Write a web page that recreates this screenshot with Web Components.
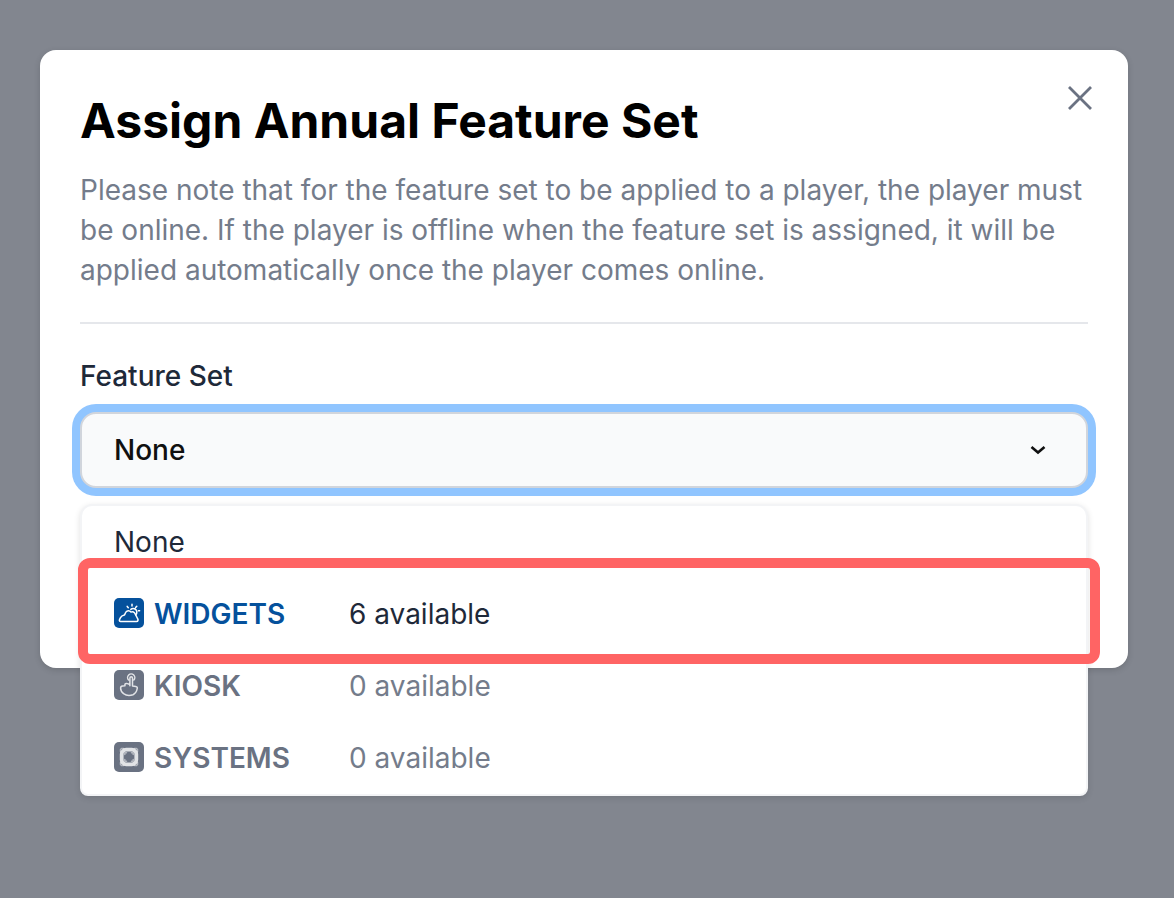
<!DOCTYPE html>
<html lang="en">
<head>
<meta charset="UTF-8">
<title>Assign Annual Feature Set</title>
<style>
    body {
        margin: 0;
        width: 1174px;
        height: 898px;
        overflow: hidden;
        background: #82868f;
        font-family: Inter, "Liberation Sans", sans-serif;
        font-size: 28px;
        line-height: 40px;
        color: #1e2939;
    }
</style>
</head>
<body>
<modal-dialog>
    <span slot="title">Assign Annual Feature Set</span>
    <span slot="description">Please note that for the feature set to be applied to a player, the player must<br>be online. If the player is offline when the feature set is assigned, it will be<br>applied automatically once the player comes online.</span>
    <select-field>
        <span slot="label">Feature Set</span>
        <span slot="value">None</span>
        <feature-option>None</feature-option>
        <feature-option icon="widgets" available="6" highlighted>WIDGETS</feature-option>
        <feature-option icon="kiosk" available="0" disabled>KIOSK</feature-option>
        <feature-option icon="systems" available="0" disabled>SYSTEMS</feature-option>
    </select-field>
</modal-dialog>

<script>
const icons = {
    widgets: `
        <path d="M6.5 23.5h16c1.600 0 2-1.600 1-3l-2.300-4.600c-.8-1.800-2.600-2.600-4.200-1.800-1.400-2-4.400-1.800-5.400.4-.5 1-.6 2-1.300 2.600-1.600.4-3 1-3.800 2.600l-1 2c-.4 1 .1 1.800 1 1.800z"/>
        <path d="M16.8 11.4c2.2-1.8 5.5-.5 6 2.200.2 1.400-.2 2.400-1.200 3.200M13.2 8.400l1.100 1.300M18 6.200v1.900M22.8 8.200l-1.200 1.400M25.600 12.700h-1.200"/>`,
    kiosk: `
        <g stroke-opacity=".8">
            <path d="M14.6 10a3.600 3.600 0 1 1 5.200 0"/>
            <path d="M15.900 15.800V8c0-1.600 2.600-1.600 2.600 0v8l3.300.4c1.300.2 1.700 1.100 1.400 2.300-.5 2.700-1.900 5-4.200 6-3 1.100-6.800.9-9.400-1-1.900-1.500-3-3.600-3-5.700 0-1.300.7-2 1.900-2.100l2.500-.1c-.4-1.600.2-2.300 1.500-2.200 1.600.1 2.500.5 3.400 1.400"/>
        </g>`,
    systems: `
        <rect x="7.700" y="7.700" width="14.600" height="14.600" rx="4.500" stroke-width="3.800" stroke-opacity=".8"/>
        <path stroke-width="1.500" stroke-opacity=".5" d="M6.500 9.500v-2l1-1h2M20.500 6.500h2l1 1v2M6.500 20.500v2l1 1h2M20.500 23.500h2l1-1v-2M10.800 12.500v-1.700h1.700M17.500 10.800h1.700v1.700M10.800 17.500v1.700h1.700M17.500 19.200h1.700v-1.700"/>`
};

class ModalDialog extends HTMLElement {
    constructor() {
        super();
        this.attachShadow({ mode: 'open' });
        this.shadowRoot.innerHTML = `
            <style>
                :host {
                    display: block;
                    box-sizing: border-box;
                    width: 1088px;
                    height: 618px;
                    margin: 50px 0 0 40px;
                    padding: 40px;
                    border-radius: 16px;
                    background: #fff;
                    box-shadow: 0 2px 6px rgba(0, 0, 0, .15);
                }
                header {
                    display: flex;
                    justify-content: space-between;
                    height: 80px;
                }
                h2 {
                    margin: 0;
                    padding-top: 7px;
                    font-size: 48px;
                    line-height: 48px;
                    font-weight: 700;
                    font-optical-sizing: none;
                    color: #000;
                    white-space: nowrap;
                }
                button {
                    width: 32px;
                    height: 32px;
                    margin: -8px -8px 0 0;
                    padding: 0;
                    border: 0;
                    background: none;
                    color: #6a7282;
                }
                button svg {
                    display: block;
                }
                p {
                    margin: 0;
                    color: #747c8b;
                    white-space: nowrap;
                }
                hr {
                    height: 2px;
                    margin: 32px 0;
                    border: 0;
                    background: #e5e7eb;
                }
            </style>
            <header>
                <h2><slot name="title"></slot></h2>
                <button aria-label="Close">
                    <svg width="32" height="32" viewBox="0 0 32 32" fill="none" stroke="currentColor" stroke-width="2.8">
                        <path d="M5 5l22 22M27 5L5 27"/>
                    </svg>
                </button>
            </header>
            <p><slot name="description"></slot></p>
            <hr>
            <slot></slot>
        `;
    }
}

class SelectField extends HTMLElement {
    constructor() {
        super();
        this.attachShadow({ mode: 'open' });
        this.shadowRoot.innerHTML = `
            <style>
                :host {
                    display: block;
                }
                .label {
                    height: 40px;
                    margin-bottom: 16px;
                    color: #1e2939;
                    font-weight: 500;
                }
                .control {
                    position: relative;
                }
                .trigger {
                    display: flex;
                    align-items: center;
                    justify-content: space-between;
                    box-sizing: border-box;
                    height: 76px;
                    padding: 0 38px 0 32px;
                    border: 2px solid #d1d5dc;
                    border-radius: 16px;
                    background: #f9fafb;
                    box-shadow: 0 0 0 8px #90c5ff;
                    color: #101010;
                    font-weight: 500;
                }
                .menu {
                    position: absolute;
                    top: 92px;
                    left: 0;
                    right: 0;
                    border: 2px solid #f3f4f6;
                    border-radius: 12px 12px 8px 8px;
                    background: #fff;
                    box-shadow: 0 2px 6px rgba(0, 0, 0, .12);
                }
            </style>
            <div class="label"><slot name="label"></slot></div>
            <div class="control">
                <div class="trigger">
                    <slot name="value"></slot>
                    <svg width="20" height="20" viewBox="0 0 20 20" fill="none" stroke="currentColor" stroke-width="2.6">
                        <path d="M3.5 7l6.5 5.5L16.5 7"/>
                    </svg>
                </div>
                <div class="menu"><slot></slot></div>
            </div>
        `;
    }
}

class FeatureOption extends HTMLElement {
    constructor() {
        super();
        this.attachShadow({ mode: 'open' });
    }

    connectedCallback() {
        const icon = this.getAttribute('icon');
        this.shadowRoot.innerHTML = `
            <style>
                :host {
                    display: flex;
                    align-items: center;
                    position: relative;
                    height: 72px;
                    padding: 0 32px;
                    --accent: #05519c;
                }
                :host([disabled]) {
                    --accent: #6a7282;
                    color: #747c8b;
                }
                .name {
                    display: flex;
                    align-items: center;
                    gap: 10px;
                    width: 235px;
                }
                .badge {
                    color: var(--accent);
                    font-weight: 600;
                }
                .badge svg {
                    display: block;
                    margin-top: -2px;
                    border-radius: 5px;
                    background: var(--accent);
                }
                .ring {
                    position: absolute;
                    z-index: 1;
                    box-sizing: border-box;
                    left: -4px;
                    top: -20px;
                    width: 1022px;
                    height: 106px;
                    border: 10px solid #ff6464;
                    border-radius: 12px;
                }
            </style>
            <div class="name ${icon ? 'badge' : ''}">
                ${icon ? `<svg width="30" height="30" viewBox="0 0 30 30" fill="none" stroke="#fff" stroke-width="1.5" stroke-linecap="round" stroke-linejoin="round">${icons[icon]}</svg>` : ''}
                <slot></slot>
            </div>
            ${icon ? `<span>${this.getAttribute('available')} available</span>` : ''}
            ${this.hasAttribute('highlighted') ? '<div class="ring"></div>' : ''}
        `;
    }
}

customElements.define('modal-dialog', ModalDialog);
customElements.define('select-field', SelectField);
customElements.define('feature-option', FeatureOption);
</script>
</body>
</html>
